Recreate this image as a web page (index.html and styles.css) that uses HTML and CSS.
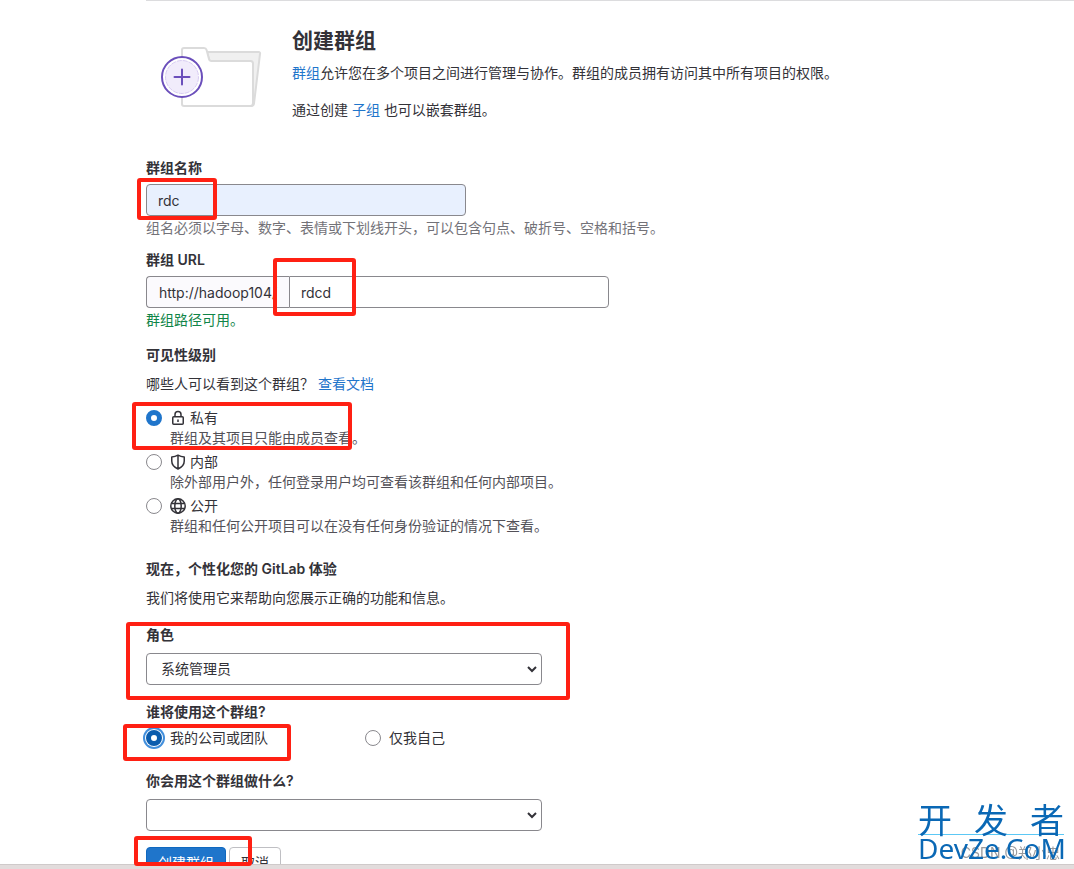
FILE: index.html
```
<!DOCTYPE html>
<html lang="zh-CN">
<head>
  <meta charset="UTF-8" />
  <meta name="viewport" content="width=device-width, initial-scale=1.0"/>
  <title>创建群组</title>
  <link rel="stylesheet" href="styles.css">
</head>
<body>
  <main class="content">
    <header class="intro">
      <div class="intro-art">
        <svg width="102" height="62" viewBox="0 0 102 62" fill="none">
          <path d="M46 5H97.500Q99.500 5 99 7L93 56.500Q92.500 59 90 59L88 20H50Z" fill="#f0f0f0" stroke="#dbdbdb" stroke-width="2" stroke-linejoin="round"/>
          <path d="M21 3Q21 1 23 1H43Q45 1 45.600 3L48 12Q48.500 14 50.500 14H89.500Q92 14 92 16.500V56Q92 59 89.500 59H23Q21 59 21 57Z" fill="#fff" stroke="#dbdbdb" stroke-width="2"/>
          <circle cx="21" cy="30" r="20" fill="#fff" stroke="#6b4fbb" stroke-width="2"/>
          <circle cx="21" cy="30" r="16.500" fill="#f1ecfb" stroke="#d8ccf2" stroke-dasharray="5 1"/>
          <path d="M21 22.500V37.500M13.500 30H28.500" stroke="#6b4fbb" stroke-width="2" stroke-linecap="round"/>
        </svg>
      </div>
      <div class="intro-text">
        <h1>创建群组</h1>
        <p><a href="#">群组</a>允许您在多个项目之间进行管理与协作。群组的成员拥有访问其中所有项目的权限。</p>
        <p>通过创建 <a href="#">子组</a> 也可以嵌套群组。</p>
      </div>
    </header>

    <form>
      <div class="form-group">
        <label class="label" for="group-name">群组名称</label>
        <div class="control name-control">
          <input class="text-input autofilled" id="group-name" type="text" value="rdc">
          <span class="mark mark-name"></span>
        </div>
        <p class="help">组名必须以字母、数字、表情或下划线开头，可以包含句点、破折号、空格和括号。</p>
      </div>

      <div class="form-group url-group">
        <label class="label" for="group-url">群组 URL</label>
        <div class="control url-control">
          <span class="url-prefix">http://hadoop104/</span>
          <input class="text-input" id="group-url" type="text" value="rdcd">
          <span class="mark mark-url"></span>
        </div>
        <p class="help success">群组路径可用。</p>
      </div>

      <fieldset class="visibility">
        <legend class="label">可见性级别</legend>
        <p class="question">哪些人可以看到这个群组？ <a href="#">查看文档</a></p>
        <div class="option">
          <input type="radio" name="visibility" id="private" checked>
          <label for="private">
            <svg width="16" height="16" viewBox="0 0 16 16" fill="none" stroke="#333238" stroke-width="1.500">
              <rect x="2.750" y="6.750" width="10.500" height="7.500" rx="1"/>
              <path d="M5 6.500V4.500a3 3 0 0 1 6 0v2M8 9.500v2.500"/>
            </svg>
            私有
          </label>
          <p>群组及其项目只能由成员查看。</p>
          <span class="mark mark-private"></span>
        </div>
        <div class="option">
          <input type="radio" name="visibility" id="internal">
          <label for="internal">
            <svg width="16" height="16" viewBox="0 0 16 16" fill="none" stroke="#333238" stroke-width="1.500" stroke-linejoin="round">
              <path d="M8 1.200C6 2.400 4 2.900 1.750 2.900V7c0 4 2.500 6.300 6.250 8 3.750-1.700 6.250-4 6.250-8V2.900C12 2.900 10 2.400 8 1.200ZM8 1.500V15"/>
            </svg>
            内部
          </label>
          <p>除外部用户外，任何登录用户均可查看该群组和任何内部项目。</p>
        </div>
        <div class="option">
          <input type="radio" name="visibility" id="public">
          <label for="public">
            <svg width="16" height="16" viewBox="0 0 16 16" fill="none" stroke="#333238" stroke-width="1.500">
              <circle cx="8" cy="8" r="7.200"/>
              <ellipse cx="8" cy="8" rx="3.200" ry="7.200"/>
              <path d="M1.500 5.500h13M1.500 10.500h13"/>
            </svg>
            公开
          </label>
          <p>群组和任何公开项目可以在没有任何身份验证的情况下查看。</p>
        </div>
      </fieldset>

      <section class="personalize">
        <h2 class="label">现在，个性化您的 GitLab 体验</h2>
        <p>我们将使用它来帮助向您展示正确的功能和信息。</p>
      </section>

      <div class="select-group">
        <label class="label" for="role">角色</label>
        <div class="select-wrap">
          <select id="role">
            <option>系统管理员</option>
          </select>
          <svg class="chevron" width="10" height="7" viewBox="0 0 10 7" fill="none" stroke="#333238" stroke-width="2"><path d="M1 1l4 4 4-4"/></svg>
        </div>
        <span class="mark mark-role"></span>
      </div>

      <fieldset class="usage">
        <legend class="label">谁将使用这个群组?</legend>
        <div class="usage-options">
          <div class="option">
            <input class="focused" type="radio" name="usage" id="company" checked>
            <label for="company">我的公司或团队</label>
            <span class="mark mark-company"></span>
          </div>
          <div class="option">
            <input type="radio" name="usage" id="just-me">
            <label for="just-me">仅我自己</label>
          </div>
        </div>
      </fieldset>

      <div class="select-group">
        <label class="label" for="purpose">你会用这个群组做什么?</label>
        <div class="select-wrap">
          <select id="purpose">
            <option></option>
          </select>
          <svg class="chevron" width="10" height="7" viewBox="0 0 10 7" fill="none" stroke="#333238" stroke-width="2"><path d="M1 1l4 4 4-4"/></svg>
        </div>
      </div>

      <div class="actions">
        <button class="btn btn-confirm" type="submit">创建群组</button>
        <button class="btn" type="button">取消</button>
        <span class="mark mark-submit"></span>
      </div>
    </form>
  </main>

  <div class="bottom-bar"></div>

  <div class="author">CSDN @郑小忠</div>
  <div class="site-logo">
    <div class="site-name"><span>开</span><span>发</span><span>者</span></div>
    <div class="site-url">DevZe.CoM</div>
  </div>
</body>
</html>
```

FILE: styles.css
```
* {
  box-sizing: border-box;
}

body {
  margin: 0;
  height: 100vh;
  overflow: hidden;
  background: #fff;
  color: #333238;
  font-family: Inter, "Noto Sans CJK SC", sans-serif;
  font-size: 14px;
  line-height: 20px;
}

h1, h2, p, fieldset, legend {
  margin: 0;
  padding: 0;
  border: 0;
}

a {
  color: #1f75cb;
  text-decoration: none;
}

.content {
  margin-left: 146px;
  border-top: 1px solid #dcdcde;
}

/* Intro */
.intro {
  display: grid;
  grid-template-columns: 146px 1fr;
  padding-top: 26px;
}

.intro-art {
  padding: 20px 0 0 15px;
}

.intro-art svg {
  display: block;
}

.intro h1 {
  margin-bottom: 8px;
  font-size: 21px;
  line-height: 28px;
}

.intro p + p {
  margin-top: 17px;
}

/* Form */
form {
  padding-top: 38px;
}

.label {
  display: block;
  font-size: 14px;
  font-weight: 600;
  line-height: 20px;
}

.control {
  position: relative;
  display: flex;
  margin: 6px 0 2px;
}

.name-control {
  max-width: 320px;
}

.url-control {
  max-width: 463px;
}

.text-input {
  flex: 1;
  min-width: 0;
  height: 32px;
  padding: 0 11px;
  border: 1px solid #89888d;
  border-radius: 4px;
  background: #fff;
  color: #333238;
  font: inherit;
}

.autofilled {
  background: #e8f0fe;
}

.url-prefix {
  width: 143px;
  padding: 6px 12px 0;
  border: 1px solid #89888d;
  border-right: 0;
  border-radius: 4px 0 0 4px;
  background: #fbfafd;
  white-space: nowrap;
}

.url-prefix + .text-input {
  border-radius: 0 4px 4px 0;
}

.help {
  color: #737278;
}

.success {
  color: #108548;
}

.url-group {
  margin-top: 12px;
}

.visibility {
  margin-top: 15px;
}

.question {
  margin: 9px 0 14px;
}

.option {
  position: relative;
  display: grid;
  grid-template-columns: 16px 1fr;
  column-gap: 8px;
  align-items: center;
}

.option + .option {
  margin-top: 4px;
}

.option label {
  display: flex;
  align-items: center;
  gap: 4px;
}

.option p {
  grid-column: 2;
  color: #535158;
}

input[type="radio"] {
  appearance: none;
  width: 16px;
  height: 16px;
  margin: 0;
  border: 1px solid #89888d;
  border-radius: 50%;
  background: #fff;
}

input[type="radio"]:checked {
  border: 5px solid #1f75cb;
}

input[type="radio"].focused {
  border-color: #0b5cad;
  box-shadow: 0 0 0 1px #fff, 0 0 0 3px #428fdc;
}

.personalize {
  margin: 23px 0 17px;
}

.personalize p {
  margin-top: 9px;
}

.select-group {
  position: relative;
}

.select-wrap {
  position: relative;
  max-width: 396px;
  margin-top: 8px;
}

select {
  display: block;
  appearance: none;
  width: 100%;
  height: 32px;
  padding: 0 14px;
  border: 1px solid #89888d;
  border-radius: 4px;
  background: #fff;
  color: #333238;
  font: inherit;
}

.chevron {
  position: absolute;
  top: 13px;
  right: 5px;
  pointer-events: none;
}

.usage {
  margin: 17px 0 23px;
}

.usage-options {
  display: grid;
  grid-template-columns: 1fr 1fr;
  max-width: 438px;
  padding-top: 6px;
}

.usage-options .option {
  margin: 0;
}

.actions {
  position: relative;
  display: flex;
  gap: 3px;
  margin-top: 16px;
}

.btn {
  height: 32px;
  padding: 0 11px;
  border: 1px solid #bfbfc3;
  border-radius: 4px;
  background: #fff;
  color: #333238;
  font: inherit;
}

.btn-confirm {
  border-color: #1068bf;
  background: #1f75cb;
  color: #fff;
}

/* Red highlight frames */
.mark {
  position: absolute;
  z-index: 2;
  border: 4px solid #ff2013;
  border-radius: 3px;
  pointer-events: none;
}

.mark-name {
  top: -6px;
  left: -9px;
  width: 80px;
  height: 42px;
}

.mark-url {
  top: -18px;
  left: 127px;
  width: 83px;
  height: 58px;
}

.mark-private {
  top: -6px;
  left: -14px;
  width: 220px;
  height: 48px;
}

.mark-role {
  top: -3px;
  left: -20px;
  width: 444px;
  height: 78px;
}

.mark-company {
  top: -4px;
  left: -23px;
  width: 168px;
  height: 37px;
}

.mark-submit {
  top: -11px;
  left: -12px;
  width: 118px;
  height: 30px;
}

.bottom-bar {
  position: fixed;
  right: 0;
  bottom: 0;
  left: 0;
  z-index: 1;
  height: 5px;
  border-top: 1px solid #cfcaca;
  background: #e2dcdc;
}

/* Watermarks */
.author {
  position: fixed;
  right: 14px;
  bottom: 6px;
  color: #99999c;
  font-size: 14px;
}

.site-logo {
  position: fixed;
  right: 10px;
  bottom: 8px;
  z-index: 3;
  width: 146px;
  color: #0a68b5;
}

.site-name {
  display: flex;
  justify-content: space-between;
  border-bottom: 1px solid #5cc8f5;
  font-family: "Noto Sans CJK SC", sans-serif;
  font-size: 34px;
  line-height: 30px;
}

.site-url {
  font-family: "Noto Sans", sans-serif;
  font-size: 28px;
  line-height: 26px;
  white-space: nowrap;
}
```
